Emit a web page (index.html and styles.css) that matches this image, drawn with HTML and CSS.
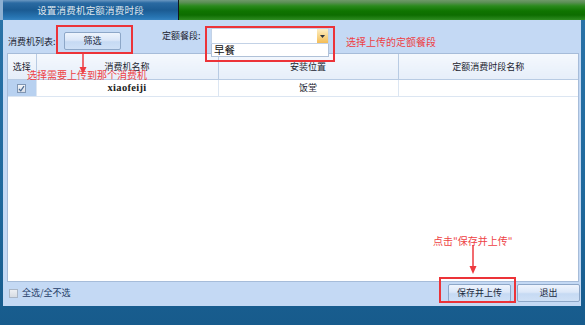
FILE: index.html
```html
<!DOCTYPE html>
<html>
<head>
<meta charset="utf-8">
<link rel="stylesheet" href="styles.css">
</head>
<body>
<div class="window">
  <div class="titlebar">
    <div class="tab">设置消费机定额消费时段</div>
    <div class="sep"></div>
    <div class="green"></div>
  </div>
  <div class="panel">
    <div class="toolbar">
      <span class="lbl lbl-list">消费机列表:</span>
      <button class="btn btn-filter">筛选</button>
      <span class="lbl lbl-meal">定额餐段:</span>
      <div class="combo">
        <div class="combo-field"></div>
        <div class="combo-arrow"><svg width="5" height="3" viewBox="0 0 5 3"><path d="M0 0H5L2.5 3Z" fill="#2b3440"/></svg></div>
        <div class="combo-list">早餐</div>
      </div>
      <span class="note note-meal">选择上传的定额餐段</span>
    </div>
    <div class="grid">
      <table>
        <colgroup><col class="c1"><col class="c2"><col class="c3"><col class="c4"></colgroup>
        <thead>
          <tr><th>选择</th><th>消费机名称</th><th>安装位置</th><th>定额消费时段名称</th></tr>
        </thead>
        <tbody>
          <tr class="row">
            <td class="sel"><span class="chk checked"><svg width="7" height="7" viewBox="0 0 7 7"><path d="M1 4L2.8 5.8L6 1.2" stroke="#4a6a92" stroke-width="1.2" fill="none"/></svg></span></td>
            <td class="name">xiaofeiji</td>
            <td>饭堂</td>
            <td></td>
          </tr>
        </tbody>
      </table>
    </div>
    <div class="footer">
      <label class="all"><span class="chk"></span><span class="all-text">全选/全不选</span></label>
      <div class="actions">
        <button class="btn btn-act">保存并上传</button>
        <button class="btn btn-act">退出</button>
      </div>
    </div>

    <div class="redbox box-filter"></div>
    <div class="redbox box-meal"></div>
    <div class="redbox box-save"></div>
    <svg class="arrow arrow-1" width="8" height="20" viewBox="0 0 8 20"><path d="M4 0V14" stroke="#ee3a3f" stroke-width="1.5"/><path d="M0.5 13L4 20L7.5 13Z" fill="#ee3a3f"/></svg>
    <span class="note note-machine">选择需要上传到那个消费机</span>
    <span class="note note-save">点击"保存并上传"</span>
    <svg class="arrow arrow-2" width="8" height="29" viewBox="0 0 8 29"><path d="M4 0V22" stroke="#ee3a3f" stroke-width="1.5"/><path d="M0.5 21L4 29L7.5 21Z" fill="#ee3a3f"/></svg>
  </div>
</div>
</body>
</html>
```
FILE: styles.css
```css
* { box-sizing: border-box; }
html, body { margin: 0; padding: 0; }
body {
  width: 585px;
  height: 325px;
  overflow: hidden;
  background: linear-gradient(#2a73a8 0, #1f699d 60%, #175b8c 100%);
  font-family: "Noto Sans CJK SC", "Noto Sans", sans-serif;
  font-size: 9px;
  color: #1b2430;
}
.window { display: flex; flex-direction: column; width: 585px; height: 325px; }
.titlebar { display: flex; height: 20px; flex: none; }
.tab {
  width: 178px;
  border-left: 3px solid #8db0d2;
  background: linear-gradient(#6b98c2 0, #2a6aa2 15%, #1b5b92 50%, #2774b2 85%, #3583c0 100%);
  color: #dfe6ee;
  font-size: 9.5px;
  line-height: 20px;
  text-align: center;
  letter-spacing: 0.2px;
}
.sep { width: 1px; background: #101820; }
.green {
  flex: 1;
  background: linear-gradient(#6f9a69 0, #5b8f55 12%, #2a8a1c 30%, #0f7400 55%, #0d6d00 75%, #2f8c22 100%);
}
.panel {
  position: relative;
  height: 286px;
  margin: 0 4px 0 3px;
  background: #c4d9f4;
  display: flex;
  flex-direction: column;
}
.toolbar { display: flex; align-items: flex-start; height: 33px; flex: none; }
.lbl { line-height: 12px; white-space: nowrap; }
.lbl-list { width: 56px; margin-left: 5px; margin-top: 16px; }
.btn {
  font-family: "Noto Sans CJK SC", "Noto Sans", sans-serif;
  font-size: 9px;
  color: #1b2a40;
  border: 1px solid #8da7c8;
  border-radius: 2px;
  background: linear-gradient(#eef4fd 0, #dbe7f8 45%, #c6daf3 55%, #cfe0f6 100%);
  padding: 0;
  height: 18px;
  line-height: 16px;
}
.btn-filter { width: 57px; margin-top: 12px; }
.lbl-meal { width: 49px; margin-left: 41px; margin-top: 10px; }
.combo { position: relative; width: 118px; height: 16px; margin-top: 8px; }
.combo-field { height: 16px; background: #fff; border: 1px solid #c3d2e6; }
.combo-arrow {
  position: absolute;
  right: 1px; top: 1px;
  width: 11px; height: 14px;
  background: linear-gradient(#fdeec4 0, #f9d68a 50%, #f4bd56 100%);
  display: flex; align-items: center; justify-content: center;
}
.combo-list {
  position: absolute;
  left: 0; top: 16px;
  width: 118px; height: 13px;
  background: #fff;
  border: 1px solid #b0c1d8;
  border-top: none;
  font-size: 10.5px;
  line-height: 12px;
  padding-left: 2px;
  color: #111;
  z-index: 2;
}
.note { color: #ee3f45; font-size: 10px; line-height: 12px; white-space: nowrap; }
.note-meal { margin-left: 17px; margin-top: 16px; }
.grid {
  margin: 0 2px 0 4px;
  height: 229px;
  flex: none;
  background: #fff;
  border: 1px solid #a6bcd9;
}
table { width: 100%; border-collapse: collapse; table-layout: fixed; }
col.c1 { width: 28px; }
col.c2 { width: 182px; }
col.c3 { width: 180px; }
th {
  height: 25px;
  font-weight: normal;
  background: linear-gradient(#f4f8fd 0, #e6eef9 100%);
  border-right: 1px solid #b8cbe3;
  border-bottom: 1px solid #b8cbe3;
  padding: 0;
  text-align: center;
}
th:last-child { border-right: none; }
td {
  height: 17px;
  padding: 0;
  text-align: center;
  border-right: 1px solid #dce6f2;
  border-bottom: 1px solid #dce6f2;
}
td:last-child { border-right: none; }
td.sel { background: #b8d1f0; }
td.name { font-family: "Liberation Serif", serif; font-size: 10.5px; font-weight: bold; letter-spacing: 0.3px; color: #222; }
.chk {
  display: inline-flex; align-items: center; justify-content: center;
  width: 9px; height: 9px;
  border: 1px solid #98a8bc;
  background: linear-gradient(#f3f5f8, #d9dee6);
  vertical-align: middle;
}
.chk.checked { border-color: #8096b3; }
.footer { display: flex; align-items: center; justify-content: space-between; height: 22px; padding: 0 1px 0 6px; }
.all { display: flex; align-items: center; }
.all .chk { width: 9px; height: 9px; border-color: #aab6c6; background: linear-gradient(#eceff3, #d7dce3); }
.all-text { margin-left: 4px; color: #1d3b66; line-height: 12px; }
.actions { display: flex; gap: 6px; }
.btn-act { width: 63px; }
.redbox { position: absolute; border: 2px solid #ec3338; pointer-events: none; }
.box-filter { left: 53px; top: 5px; width: 77px; height: 29px; }
.box-meal { left: 202px; top: 6px; width: 130px; height: 36px; }
.box-save { left: 436px; top: 257px; width: 77px; height: 26px; }
.arrow { position: absolute; }
.arrow-1 { left: 76px; top: 34px; }
.arrow-2 { left: 466px; top: 225px; }
.note-machine { position: absolute; left: 24px; top: 49px; }
.note-save { position: absolute; left: 430px; top: 215px; }
```
